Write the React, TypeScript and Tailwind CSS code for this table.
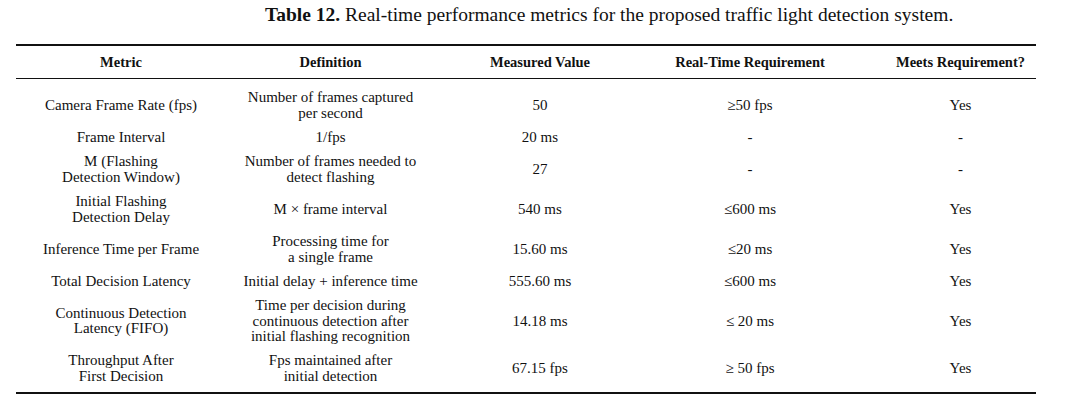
const rows: { metric: string[]; def: string[]; value: string; req: string; meets: string }[] = [
  { metric: ["Camera Frame Rate (fps)"], def: ["Number of frames captured", "per second"], value: "50", req: "≥50 fps", meets: "Yes" },
  { metric: ["Frame Interval"], def: ["1/fps"], value: "20 ms", req: "-", meets: "-" },
  { metric: ["M (Flashing", "Detection Window)"], def: ["Number of frames needed to", "detect flashing"], value: "27", req: "-", meets: "-" },
  { metric: ["Initial Flashing", "Detection Delay"], def: ["M × frame interval"], value: "540 ms", req: "≤600 ms", meets: "Yes" },
  { metric: ["Inference Time per Frame"], def: ["Processing time for", "a single frame"], value: "15.60 ms", req: "≤20 ms", meets: "Yes" },
  { metric: ["Total Decision Latency"], def: ["Initial delay + inference time"], value: "555.60 ms", req: "≤600 ms", meets: "Yes" },
  {
    metric: ["Continuous Detection", "Latency (FIFO)"],
    def: ["Time per decision during", "continuous detection after", "initial flashing recognition"],
    value: "14.18 ms",
    req: "≤ 20 ms",
    meets: "Yes",
  },
  { metric: ["Throughput After", "First Decision"], def: ["Fps maintained after", "initial detection"], value: "67.15 fps", req: "≥ 50 fps", meets: "Yes" },
];

function Lines({ lines }: { lines: string[] }) {
  return (
    <div>
      {lines.map((l, i) => (
        <div key={i}>{l}</div>
      ))}
    </div>
  );
}

export default function App() {
  const grid = "grid grid-cols-[210px_209px_210px_210px_181px] items-center text-center";

  return (
    <div className="w-[1091px] h-[401px] bg-white text-[#111] font-['Liberation_Serif',serif] overflow-hidden">
      {/* Caption */}
      <div className="pt-[4px] pl-[265px] text-[19.5px] leading-[21px] whitespace-nowrap">
        <span className="font-bold">Table 12.</span> Real-time performance metrics for the proposed traffic light detection system.
      </div>

      {/* Table */}
      <div className="ml-[16px] mt-[19px] w-[1020px] border-t-2 border-b-2 border-[#111]">
        <div className={`${grid} h-[33px] pt-[1px] border-b border-[#111] text-[14.5px] font-bold`}>
          <div>Metric</div>
          <div>Definition</div>
          <div>Measured Value</div>
          <div>Real-Time Requirement</div>
          <div className="pl-[30px]">Meets Requirement?</div>
        </div>

        <div className="pt-[7px] pb-[3px] text-[15px] leading-[15.5px]">
          {rows.map((r, i) => (
            <div key={i} className={`${grid} py-[4.4px]`}>
              <Lines lines={r.metric} />
              <Lines lines={r.def} />
              <div>{r.value}</div>
              <div>{r.req}</div>
              <div className="pl-[30px]">{r.meets}</div>
            </div>
          ))}
        </div>
      </div>
    </div>
  );
}
